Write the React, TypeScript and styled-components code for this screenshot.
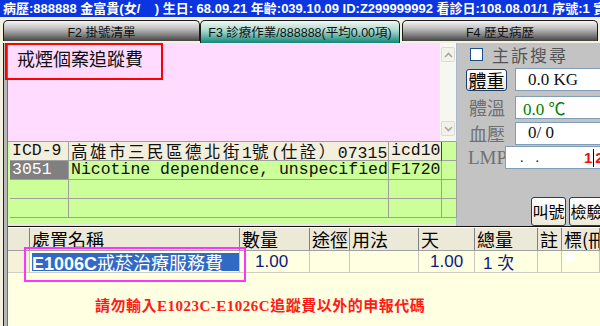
import styled, { createGlobalStyle } from "styled-components";

const GlobalStyle = createGlobalStyle`
  html, body { margin: 0; padding: 0; background: #f4f1e1; }
  * { box-sizing: border-box; }
`;

const cjk = `"Noto Sans CJK TC", "Noto Sans CJK SC", sans-serif`;
const sans = `"Liberation Sans", ${cjk}`;
const serif = `"Liberation Serif", ${cjk}`;
const mono = `"Liberation Mono", ${cjk}`;

const bottomCols = "22px 210px 70px 40px 69px 56px 63px 24px 38px";

const Chevron = ({ up }: { up?: boolean }) => (
  <svg width="9" height="6" viewBox="0 0 9 6">
    <polyline
      points={up ? "1,5 4.5,1.5 8,5" : "1,1 4.5,4.5 8,1"}
      fill="none"
      stroke="#a8a8a0"
      strokeWidth="1.6"
    />
  </svg>
);

const App = () => {
  return (
    <>
      <GlobalStyle />
      <Page>
        <TitleBar>
          病歷:888888 金富貴(女/    ) 生日: 68.09.21 年齡:039.10.09 ID:Z299999992 看診日:108.08.01/1 序號:1 實診
        </TitleBar>

        <TabBar>
          <Tab $w={197}>F2 掛號清單</Tab>
          <Tab $w={200} $active>F3 診療作業/888888(平均0.00項)</Tab>
          <Tab $w={196} $gap={2}>F4 歷史病歷</Tab>
        </TabBar>

        <Body>
          <LeftEdge />
          <Main>
            <Upper>
              <LeftCol>
                <Memo>
                  <MemoText>戒煙個案追蹤費</MemoText>
                  <ScrollBar>
                    <ScrollBtn><Chevron up /></ScrollBtn>
                    <ScrollBtn><Chevron /></ScrollBtn>
                  </ScrollBar>
                </Memo>

                <DiagTable>
                  <DiagCell $head>ICD-9</DiagCell>
                  <DiagCell $head>
                    <Wide>高雄市三民區德北街</Wide>1<Wide>號</Wide>(<Wide>仕詮）</Wide>07315
                  </DiagCell>
                  <DiagCell $head $strong>icd10</DiagCell>
                  <DiagCell />

                  <DiagCell $code>3051</DiagCell>
                  <DiagCell>Nicotine dependence, unspecified</DiagCell>
                  <DiagCell>F1720</DiagCell>
                  <DiagCell />

                  <DiagCell />
                  <DiagCell />
                  <DiagCell />
                  <DiagCell />

                  <DiagCell />
                  <DiagCell />
                  <DiagCell />
                  <DiagCell />
                </DiagTable>
              </LeftCol>

              <RightPanel>
                <CheckRow>
                  <CheckBox />
                  <CheckLabel>主訴搜尋</CheckLabel>
                </CheckRow>

                <FieldRow>
                  <LabelButton>體重</LabelButton>
                  <Field $pad={12}>0.0 KG</Field>
                </FieldRow>

                <FieldRow>
                  <FieldLabel>體溫</FieldLabel>
                  <Field $pad={7} $color="#008000">0.0 ℃</Field>
                </FieldRow>

                <FieldRow>
                  <FieldLabel>血壓</FieldLabel>
                  <Field $pad={12}>0/ 0</Field>
                </FieldRow>

                <FieldRow $labelW={39}>
                  <FieldLabel $latin>LMP</FieldLabel>
                  <Field $pad={14}>
                    <Dot>.</Dot>
                    <Dot $ml={12}>.</Dot>
                    <LmpRed $ml={45}>1</LmpRed>
                    <Caret />
                    <LmpRed>2</LmpRed>
                  </Field>
                </FieldRow>

                <ActionRow>
                  <ActionButton>叫號</ActionButton>
                  <ActionButton>檢驗</ActionButton>
                </ActionRow>
              </RightPanel>
            </Upper>

            <Bottom>
              <GridHead>
                <HeadCell />
                <HeadCell>處置名稱</HeadCell>
                <HeadCell>數量</HeadCell>
                <HeadCell>途徑</HeadCell>
                <HeadCell>用法</HeadCell>
                <HeadCell>天</HeadCell>
                <HeadCell>總量</HeadCell>
                <HeadCell>註</HeadCell>
                <HeadCell>標(冊</HeadCell>
              </GridHead>

              <GridRow>
                <RowCell $muted />
                <RowCell>
                  <Selected>
                    <b>E1006C</b>戒菸治療服務費
                  </Selected>
                </RowCell>
                <RowCell $pad={15}><Num>1.00</Num></RowCell>
                <RowCell />
                <RowCell />
                <RowCell $pad={11}><Num>1.00</Num></RowCell>
                <RowCell $pad={8}><Num>1 <Unit>次</Unit></Num></RowCell>
                <RowCell />
                <RowCell><Flag /></RowCell>
              </GridRow>

              <Notice>請勿輸入E1023C-E1026C追蹤費以外的申報代碼</Notice>
            </Bottom>
          </Main>
        </Body>

        <RedFrame />
        <MagentaFrame />
      </Page>
    </>
  );
};

const Page = styled.div`
  position: relative;
  width: 600px;
  height: 326px;
  overflow: hidden;
  display: flex;
  flex-direction: column;
  background: #f4f1e1;
  font-family: ${sans};
`;

const TitleBar = styled.div`
  flex: none;
  height: 17px;
  padding-left: 3px;
  background: #0a35e0;
  color: #fff;
  font-size: 13px;
  font-weight: bold;
  line-height: 17px;
  white-space: pre;
  overflow: hidden;
`;

const TabBar = styled.div`
  flex: none;
  height: 26px;
  padding-left: 3px;
  display: flex;
  align-items: flex-end;
`;

const Tab = styled.div<{ $w: number; $active?: boolean; $gap?: number }>`
  flex: none;
  width: ${(p) => p.$w}px;
  height: ${(p) => (p.$active ? 23 : 21)}px;
  margin-left: ${(p) => p.$gap || 0}px;
  margin-bottom: ${(p) => (p.$active ? 0 : 2)}px;
  border: 1px solid #1a1a1a;
  border-bottom: none;
  border-radius: 5px 5px 0 0;
  background: ${(p) =>
    p.$active
      ? "linear-gradient(#eef8f4, #a8d6cc 45%, #108676)"
      : "linear-gradient(#f6f6f6, #bcbcbc 40%, #444444)"};
  display: flex;
  justify-content: center;
  padding-top: 1px;
  font-size: 12.5px;
  color: #111;
  white-space: nowrap;
  overflow: hidden;
`;

const Body = styled.div`
  flex: 1;
  display: flex;
  min-height: 0;
`;

const LeftEdge = styled.div`
  flex: none;
  width: 8px;
  background: linear-gradient(
    to right,
    #f4f1e1 0 3px,
    #202020 3px 4px,
    #b8b8b8 4px 7px,
    #707070 7px 8px
  );
`;

const Main = styled.div`
  flex: 1;
  min-width: 0;
  display: flex;
  flex-direction: column;
`;

const Upper = styled.div`
  flex: none;
  height: 183px;
  display: flex;
`;

const LeftCol = styled.div`
  flex: none;
  width: 449px;
  display: flex;
  flex-direction: column;
  border-right: 1px solid #a8b8d0;
`;

const Memo = styled.div`
  flex: none;
  height: 99px;
  display: flex;
  border-bottom: 1px solid #a0a0a0;
`;

const MemoText = styled.div`
  flex: 1;
  background: #ffdcff;
  padding: 4px 0 0 9px;
  font-family: ${cjk};
  font-size: 18px;
  line-height: 22px;
  color: #111;
`;

const ScrollBar = styled.div`
  flex: none;
  width: 16px;
  background: #f7f7f1;
  display: flex;
  flex-direction: column;
  justify-content: space-between;
  padding: 4px 1px 5px 1px;
`;

const ScrollBtn = styled.div`
  height: 15px;
  border: 1px solid #dcdcd2;
  border-radius: 2px;
  background: #f2f2ea;
  display: flex;
  align-items: center;
  justify-content: center;
`;

const DiagTable = styled.div`
  flex: 1;
  background: #ccff99;
  padding-left: 2px;
  display: grid;
  grid-template-columns: 59px 320px 53px 15px;
  grid-auto-rows: 19px;
  border-bottom: 2px solid #e8e8e0;
`;

const DiagCell = styled.div<{ $head?: boolean; $code?: boolean; $strong?: boolean }>`
  border-right: 1px solid ${(p) => (p.$strong ? "#404040" : "#a0a0a0")};
  border-bottom: 1px solid #a0a0a0;
  background: ${(p) => (p.$code ? "#808080" : p.$head ? "#f3efdd" : "transparent")};
  color: ${(p) => (p.$code ? "#fff" : "#111")};
  font-family: ${mono};
  font-size: 16.5px;
  line-height: 18px;
  padding-left: 2px;
  white-space: nowrap;
  overflow: hidden;
`;

const Wide = styled.span`
  font-family: ${cjk};
  font-size: 16.5px;
  letter-spacing: 2.5px;
`;

const RightPanel = styled.div`
  flex: 1;
  min-width: 0;
  background: #c3c3c3;
  padding-left: 9px;
  display: flex;
  flex-direction: column;
  gap: 3px;
  overflow: hidden;
`;

const CheckRow = styled.div`
  flex: none;
  margin-top: 3px;
  height: 16px;
  padding-left: 4px;
  display: flex;
  align-items: center;
  gap: 9px;
  margin-bottom: 3px;
`;

const CheckBox = styled.div`
  flex: none;
  width: 13px;
  height: 13px;
  background: #fff;
  border: 1px solid #1c4f86;
`;

const CheckLabel = styled.span`
  font-family: ${cjk};
  font-size: 17px;
  letter-spacing: 2px;
  color: #555;
  white-space: nowrap;
`;

const FieldRow = styled.div<{ $labelW?: number }>`
  flex: none;
  height: 23px;
  display: grid;
  grid-template-columns: ${(p) => p.$labelW || 49}px 100px;
  align-items: center;
`;

const LabelButton = styled.div`
  width: 41px;
  height: 22px;
  border: 1px solid #1c3f73;
  border-radius: 3px;
  background: linear-gradient(#ffffff, #ece9d8);
  font-family: ${cjk};
  font-size: 18px;
  line-height: 20px;
  text-align: center;
  color: #000;
  white-space: nowrap;
`;

const FieldLabel = styled.span<{ $latin?: boolean }>`
  padding-left: ${(p) => (p.$latin ? 2 : 3)}px;
  font-family: ${(p) => (p.$latin ? serif : cjk)};
  font-size: ${(p) => (p.$latin ? 19 : 18)}px;
  color: #707070;
  white-space: nowrap;
`;

const Field = styled.div<{ $pad: number; $color?: string }>`
  height: 23px;
  background: #fff;
  border: 1px solid #7f9db9;
  padding-left: ${(p) => p.$pad}px;
  display: flex;
  align-items: center;
  font-family: ${serif};
  font-size: 17px;
  color: ${(p) => p.$color || "#111"};
  white-space: pre;
`;

const Dot = styled.span<{ $ml?: number }>`
  margin-left: ${(p) => p.$ml || 0}px;
  font-size: 14px;
`;

const LmpRed = styled.span<{ $ml?: number }>`
  margin-left: ${(p) => p.$ml || 0}px;
  font-family: ${sans};
  font-size: 15px;
  font-weight: bold;
  color: #ee1111;
`;

const Caret = styled.span`
  flex: none;
  width: 1px;
  height: 18px;
  margin: 0 1px;
  background: #000;
`;

const ActionRow = styled.div`
  flex: none;
  margin-top: 25px;
  padding-left: 65px;
  display: flex;
  gap: 3px;
`;

const ActionButton = styled.div`
  flex: none;
  width: 35px;
  height: 29px;
  border: 1px solid #1c3f73;
  border-radius: 3px;
  background: linear-gradient(#ffffff, #ece9d8);
  font-family: ${cjk};
  font-size: 16px;
  line-height: 27px;
  text-align: center;
  color: #000;
  white-space: nowrap;
  overflow: hidden;
`;

const Bottom = styled.div`
  flex: 1;
  display: flex;
  flex-direction: column;
  background: #ffffe1;
  border-top: 1px solid #101010;
`;

const GridHead = styled.div`
  flex: none;
  height: 24px;
  display: grid;
  grid-template-columns: ${bottomCols};
  background: #ece9d8;
  border-top: 1px solid #fff;
  border-bottom: 1px solid #a0a0a0;
`;

const HeadCell = styled.div`
  border-right: 1px solid #808080;
  padding-left: 2px;
  font-family: ${cjk};
  font-size: 18px;
  line-height: 22px;
  color: #000;
  white-space: nowrap;
  overflow: hidden;
`;

const GridRow = styled.div`
  flex: none;
  height: 22px;
  display: grid;
  grid-template-columns: ${bottomCols};
  border-bottom: 1px solid #d0d0c0;
`;

const RowCell = styled.div<{ $pad?: number; $muted?: boolean }>`
  border-right: 1px solid #c8c8c0;
  padding-left: ${(p) => p.$pad || 0}px;
  background: ${(p) => (p.$muted ? "#f6f2da" : "transparent")};
  display: flex;
  align-items: center;
  white-space: nowrap;
  overflow: hidden;
`;

const Selected = styled.div`
  margin-left: 2px;
  height: 18px;
  flex: 1;
  background: #316ac5;
  color: #fff;
  font-family: ${cjk};
  font-size: 18px;
  line-height: 18px;
  b {
    font-family: ${sans};
    font-weight: bold;
  }
`;

const Num = styled.span`
  font-family: ${sans};
  font-size: 17px;
  color: #0c1a80;
`;

const Unit = styled.span`
  font-family: ${cjk};
  font-size: 17px;
`;

const Flag = styled.div`
  width: 9px;
  height: 9px;
  margin: -9px 0 0 4px;
  background: #fff;
`;

const Notice = styled.div`
  padding: 21px 0 0 87px;
  font-family: ${serif};
  font-size: 15px;
  font-weight: bold;
  color: #ff1a1a;
  letter-spacing: 0.5px;
`;

const RedFrame = styled.div`
  position: absolute;
  left: 5px;
  top: 43px;
  width: 158px;
  height: 37px;
  border: 2px solid #ff0000;
`;

const MagentaFrame = styled.div`
  position: absolute;
  left: 24px;
  top: 247px;
  width: 222px;
  height: 35px;
  border: 2px solid #ff33ff;
`;

export default App;
